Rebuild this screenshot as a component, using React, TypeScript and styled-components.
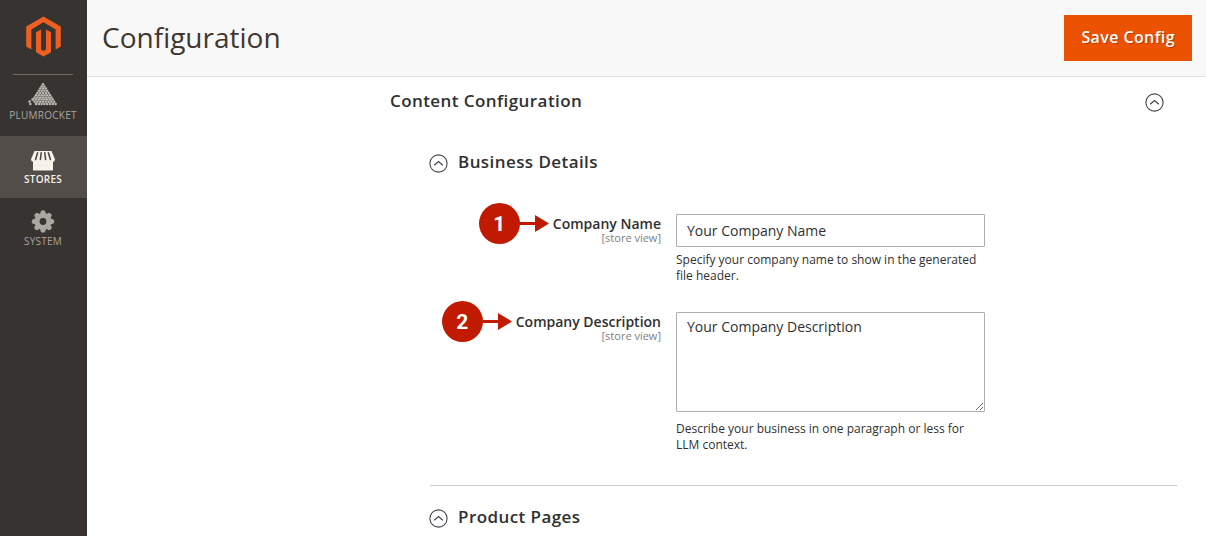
import React, { useId, useState } from "react";
import styled, { createGlobalStyle } from "styled-components";

const GlobalStyle = createGlobalStyle`
  *, *::before, *::after { box-sizing: border-box; }
  body {
    margin: 0;
    background: #fff;
    color: #303030;
    font-family: "Open Sans", "Noto Sans", sans-serif;
    font-size: 14px;
    line-height: 20px;
  }
`;

const Page = styled.div`
  display: flex;
  min-height: 100vh;
`;

const Sidebar = styled.aside`
  flex: 0 0 87px;
  background: #373330;
`;

const LogoLink = styled.a`
  display: flex;
  justify-content: center;
  margin: 0 14px -1px 13px;
  padding: 16px 0 17px;
  border-bottom: 1px solid #736963;
`;

const Menu = styled.nav`
  display: flex;
  flex-direction: column;
`;

const MenuLink = styled.a<{ $active?: boolean }>`
  display: flex;
  flex-direction: column;
  align-items: center;
  height: 62px;
  padding: 7px 1px 0 0;
  font-size: 10px;
  line-height: 16px;
  letter-spacing: 0.025em;
  font-weight: ${(p) => (p.$active ? 600 : 400)};
  text-decoration: none;
  text-transform: uppercase;
  color: ${(p) => (p.$active ? "#f7f3eb" : "#aaa6a0")};
  background: ${(p) => (p.$active ? "#524d49" : "transparent")};
  svg { display: block; }
`;

const Main = styled.main`
  flex: 1;
  min-width: 0;
`;

const Header = styled.header`
  display: flex;
  align-items: center;
  justify-content: space-between;
  height: 77px;
  padding: 0 14px 0 15px;
  background: #f8f8f8;
  border-bottom: 1px solid #e3e3e3;
`;

const Title = styled.h1`
  margin: 0;
  padding-bottom: 2px;
  font-size: 28px;
  line-height: 36px;
  font-weight: 400;
  color: #41362f;
`;

const SaveButton = styled.button`
  height: 46px;
  padding: 0 17px 2px;
  border: 0;
  background: #eb5202;
  color: #fff;
  font: 600 16px/24px "Open Sans", sans-serif;
  letter-spacing: 0.025em;
  text-shadow: 1px 1px 0 rgba(0, 0, 0, 0.25);
  cursor: pointer;
`;

const Content = styled.div`
  padding: 12px 29px 0 303px;
`;

const SectionButton = styled.button<{ $end?: boolean }>`
  display: flex;
  flex-direction: ${(p) => (p.$end ? "row-reverse" : "row")};
  justify-content: ${(p) => (p.$end ? "space-between" : "flex-start")};
  align-items: center;
  gap: 10px;
  width: 100%;
  padding: 0 ${(p) => (p.$end ? "13px" : "0")} 0 0;
  border: 0;
  background: none;
  color: #303030;
  font: 600 17px/24px "Open Sans", sans-serif;
  letter-spacing: 0.025em;
  text-align: left;
  cursor: pointer;
  svg { display: block; margin-top: 2px; overflow: visible; }
`;

const SectionHeading = styled.h2`
  margin: 0;
`;

const Nested = styled.div`
  padding: 37px 0 0 40px;
`;

const Group = styled.section`
  & + & {
    padding-top: 19px;
    border-top: 1px solid #ccc;
  }
`;

const Fields = styled.div`
  display: flex;
  flex-direction: column;
  gap: 17px;
  padding: 29px 0 32px;
`;

const FieldRow = styled.div`
  display: grid;
  grid-template-columns: 231fr 309fr 177fr;
  column-gap: 15px;
`;

const LabelCell = styled.div`
  display: flex;
  justify-content: flex-end;
  align-items: flex-start;
  gap: 4px;
`;

const Callout = styled.div`
  display: flex;
  align-items: center;
`;

const CalloutNumber = styled.span`
  display: flex;
  align-items: center;
  justify-content: center;
  width: 41px;
  height: 41px;
  border-radius: 50%;
  background: #c01a00;
  color: #fff;
  font: 700 21px/24px Roboto, Arial, sans-serif;
`;

const FieldLabel = styled.label`
  padding-top: 13px;
  text-align: right;
  font-weight: 600;
  line-height: 16px;
  white-space: nowrap;
`;

const Scope = styled.span`
  display: block;
  font-size: 11px;
  line-height: 12px;
  font-weight: 400;
  color: #808080;
`;

const ControlCell = styled.div`
  padding-top: 11px;
`;

const TextInput = styled.input`
  display: block;
  width: 100%;
  height: 33px;
  padding: 0 10px;
  border: 1px solid #adadad;
  border-radius: 1px;
  background: #fff;
  color: #303030;
  font: 400 14px/20px "Open Sans", sans-serif;
`;

const TextArea = styled.textarea`
  display: block;
  width: 100%;
  height: 100px;
  padding: 4px 10px;
  border: 1px solid #adadad;
  border-radius: 1px;
  background: #fff;
  color: #303030;
  font: 400 14px/20px "Open Sans", sans-serif;
  resize: vertical;
`;

const Note = styled.p<{ $gap: number }>`
  margin: ${(p) => p.$gap}px 0 0;
  font-size: 12px;
  line-height: 16px;
`;

const MagentoLogo = () => (
  <svg width="35" height="41" viewBox="0 0 36 41" preserveAspectRatio="none" fill="#ee5f22" aria-hidden="true">
    <path d="M18 0.5 35.8 10.5V30.5L30.5 33.4V13.4L18 6.3 5.5 13.4V33.4L.2 30.5V10.5Z" />
    <path d="M15.5 13.4V33.4L18 34.9 20.5 33.4V13.4L25.7 16.3V36.2L18 40.6 10.3 36.2V16.3Z" />
  </svg>
);

const pyramidDots: [number, number][] = [];
for (let row = 0; row < 10; row++) {
  for (let i = 0; i <= row; i++) {
    const x = 15 - row * 1.4 + i * 2.8;
    if (row > 4 && x < 10 && (i * 3 + row) % 4 === 0) continue;
    pyramidDots.push([x, 3.2 + row * 2.2]);
  }
}
pyramidDots.push([4.5, 18.6], [1.5, 20.5]);

const PlumrocketIcon = () => (
  <svg width="30" height="26" viewBox="0 0 30 26" fill="#bdb9b3" aria-hidden="true">
    {pyramidDots.map(([x, y], i) => (
      <circle key={i} cx={x} cy={y} r="1.25" />
    ))}
  </svg>
);

const StoresIcon = () => (
  <svg width="26" height="28" viewBox="0 0 26 28" aria-hidden="true">
    <path
      fill="#f7f3eb"
      d="M4.5 8H21.5L25 16.2Q24.8 18.7 23 18.7V27.5H3V18.7Q1.2 18.7 1 16.2Z"
    />
    <path
      d="M7.6 9.8 5.6 16.5M11.2 9.8 10.4 16.5M14.8 9.8 15.6 16.5M18.4 9.8 20.4 16.5"
      stroke="#524d49"
      strokeWidth="1.6"
      strokeLinecap="round"
    />
    <path d="M5 22.5H21" stroke="#dcd7cf" strokeWidth="0.6" strokeDasharray="1 2" />
  </svg>
);

const SystemIcon = () => (
  <svg width="24" height="28" viewBox="0 0 24 28" aria-hidden="true">
    <g fill="#aaa6a0" transform="translate(12 16.5)">
      {[0, 45, 90, 135, 180, 225, 270, 315].map((a) => (
        <path key={a} d="M-3.2-7-2-10.5Q0-12 2-10.5L3.2-7Z" transform={`rotate(${a})`} />
      ))}
      <circle r="8.2" />
      <circle r="3.4" fill="#373330" />
    </g>
  </svg>
);

const ToggleIcon = ({ open }: { open: boolean }) => (
  <svg width="18" height="19" viewBox="1 0 18 19" fill="none" stroke="#41464d" aria-hidden="true">
    <circle cx="9.5" cy="9.5" r="8.6" strokeWidth="1.1" />
    <path d={open ? "M5.2 11.2 9.5 7.6 13.8 11.2" : "M5.2 7.8 9.5 11.4 13.8 7.8"} strokeWidth="1.3" />
  </svg>
);

const ArrowIcon = () => (
  <svg width="29" height="17" viewBox="0 0 29 17" fill="#c01a00" aria-hidden="true">
    <path d="M0 7H15V0L29 8.5 15 17V10H0Z" />
  </svg>
);

function Section({
  title,
  end,
  children,
}: {
  title: string;
  end?: boolean;
  children?: React.ReactNode;
}) {
  const [open, setOpen] = useState(true);
  return (
    <>
      <SectionHeading>
        <SectionButton type="button" $end={end} aria-expanded={open} onClick={() => setOpen(!open)}>
          <ToggleIcon open={open} />
          <span>{title}</span>
        </SectionButton>
      </SectionHeading>
      {open && children}
    </>
  );
}

function Field({
  number,
  label,
  value,
  note,
  multiline,
}: {
  number: number;
  label: string;
  value: string;
  note: string;
  multiline?: boolean;
}) {
  const id = useId();
  return (
    <FieldRow>
      <LabelCell>
        <Callout>
          <CalloutNumber>{number}</CalloutNumber>
          <ArrowIcon />
        </Callout>
        <FieldLabel htmlFor={id}>
          {label}
          <Scope>[store view]</Scope>
        </FieldLabel>
      </LabelCell>
      <ControlCell>
        {multiline ? (
          <TextArea id={id} defaultValue={value} />
        ) : (
          <TextInput id={id} type="text" defaultValue={value} />
        )}
        <Note $gap={multiline ? 9 : 5}>{note}</Note>
      </ControlCell>
    </FieldRow>
  );
}

export default function App() {
  return (
    <Page>
      <GlobalStyle />
      <Sidebar>
        <LogoLink href="#" aria-label="Magento Admin">
          <MagentoLogo />
        </LogoLink>
        <Menu>
          <MenuLink href="#plumrocket">
            <PlumrocketIcon />
            Plumrocket
          </MenuLink>
          <MenuLink href="#stores" $active>
            <StoresIcon />
            Stores
          </MenuLink>
          <MenuLink href="#system">
            <SystemIcon />
            System
          </MenuLink>
        </Menu>
      </Sidebar>
      <Main>
        <Header>
          <Title>Configuration</Title>
          <SaveButton type="button">Save Config</SaveButton>
        </Header>
        <Content>
          <Section title="Content Configuration" end>
            <Nested>
              <Group>
                <Section title="Business Details">
                  <Fields>
                    <Field
                      number={1}
                      label="Company Name"
                      value="Your Company Name"
                      note="Specify your company name to show in the generated file header."
                    />
                    <Field
                      number={2}
                      label="Company Description"
                      value="Your Company Description"
                      note="Describe your business in one paragraph or less for LLM context."
                      multiline
                    />
                  </Fields>
                </Section>
              </Group>
              <Group>
                <Section title="Product Pages" />
              </Group>
            </Nested>
          </Section>
        </Content>
      </Main>
    </Page>
  );
}
